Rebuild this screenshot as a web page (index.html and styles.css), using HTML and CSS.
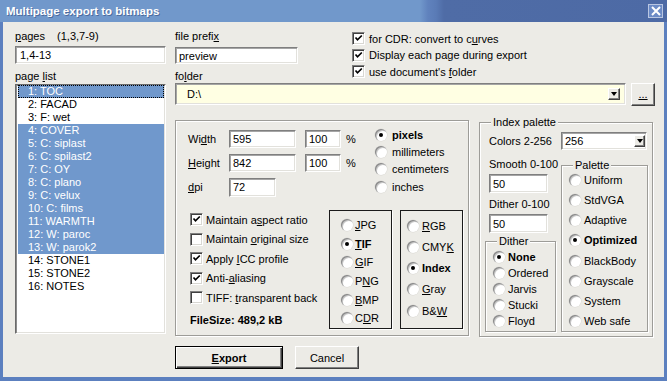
FILE: index.html
```html
<!DOCTYPE html>
<html lang="en">
<head>
    <meta charset="UTF-8">
    <meta name="viewport" content="width=device-width, initial-scale=1.0">
    <title>Multipage export to bitmaps</title>
    <link rel="stylesheet" href="styles.css">
</head>
<body>
    <div class="window">
        <div class="titlebar">
            <span class="title">Multipage export to bitmaps</span>
            <span class="close-btn">
                <svg width="10" height="10" viewBox="0 0 10 10"><path d="M1 1 L9 9 M9 1 L1 9" stroke="#fff" stroke-width="2" fill="none"/></svg>
            </span>
        </div>

        <div class="client">
            <div class="left-col">
                <div class="label"><u>p</u>ages <span class="hint">(1,3,7-9)</span></div>
                <div class="field pages-field">1,4-13</div>
                <div class="label list-label">page <u>l</u>ist</div>
                <div class="listbox">
                    <div class="item sel focus">1: TOC</div>
                    <div class="item">2: FACAD</div>
                    <div class="item">3: F: wet</div>
                    <div class="item sel">4: COVER</div>
                    <div class="item sel">5: C: siplast</div>
                    <div class="item sel">6: C: spilast2</div>
                    <div class="item sel">7: C: OY</div>
                    <div class="item sel">8: C: plano</div>
                    <div class="item sel">9: C: velux</div>
                    <div class="item sel">10: C: films</div>
                    <div class="item sel">11: WARMTH</div>
                    <div class="item sel">12: W: paroc</div>
                    <div class="item sel">13: W: parok2</div>
                    <div class="item">14: STONE1</div>
                    <div class="item">15: STONE2</div>
                    <div class="item">16: NOTES</div>
                </div>
            </div>

            <div class="main-col">
                <div class="top-row">
                    <div class="prefix-col">
                        <div class="label">file prefi<u>x</u></div>
                        <div class="field prefix-field">preview</div>
                        <div class="label folder-label">fo<u>l</u>der</div>
                    </div>
                    <div class="opts-col">
                        <div class="check-row"><span class="chk"><svg viewBox="0 0 9 9"><path d="M1.5 3.5 L3.5 5.8 L7.8 1.5" /></svg></span><span>for CDR: convert to c<u>u</u>rves</span></div>
                        <div class="check-row"><span class="chk"><svg viewBox="0 0 9 9"><path d="M1.5 3.5 L3.5 5.8 L7.8 1.5" /></svg></span><span>Display each page during export</span></div>
                        <div class="check-row"><span class="chk"><svg viewBox="0 0 9 9"><path d="M1.5 3.5 L3.5 5.8 L7.8 1.5" /></svg></span><span>use document's <u>f</u>older</span></div>
                    </div>
                </div>

                <div class="folder-row">
                    <div class="field combo folder-combo">
                        <span class="combo-text">D:\</span>
                        <span class="drop-btn"><i></i></span>
                    </div>
                    <div class="btn browse-btn"><u>...</u></div>
                </div>

                <div class="panels">
                    <div class="etched size-frame">
                        <div class="dims-row">
                            <div class="dims">
                                <div class="dim-row">
                                    <span class="dim-label">Wi<u>d</u>th</span>
                                    <div class="field size-field">595</div>
                                    <div class="field pct-field">100</div>
                                    <span class="pct">%</span>
                                </div>
                                <div class="dim-row">
                                    <span class="dim-label"><u>H</u>eight</span>
                                    <div class="field size-field">842</div>
                                    <div class="field pct-field">100</div>
                                    <span class="pct">%</span>
                                </div>
                                <div class="dim-row">
                                    <span class="dim-label"><u>d</u>pi</span>
                                    <div class="field dpi-field">72</div>
                                </div>
                            </div>
                            <div class="units">
                                <div class="radio-row"><span class="radio on"></span><b>pixels</b></div>
                                <div class="radio-row"><span class="radio"></span><span>millimeters</span></div>
                                <div class="radio-row"><span class="radio"></span><span>centimeters</span></div>
                                <div class="radio-row"><span class="radio"></span><span>inches</span></div>
                            </div>
                        </div>

                        <div class="lower-row">
                            <div class="checks">
                                <div class="check-row"><span class="chk"><svg viewBox="0 0 9 9"><path d="M1.5 3.5 L3.5 5.8 L7.8 1.5" /></svg></span><span>Maintain a<u>s</u>pect ratio</span></div>
                                <div class="check-row"><span class="chk"></span><span>Maintain <u>o</u>riginal size</span></div>
                                <div class="check-row"><span class="chk"><svg viewBox="0 0 9 9"><path d="M1.5 3.5 L3.5 5.8 L7.8 1.5" /></svg></span><span>Apply <u>I</u>CC profile</span></div>
                                <div class="check-row"><span class="chk"><svg viewBox="0 0 9 9"><path d="M1.5 3.5 L3.5 5.8 L7.8 1.5" /></svg></span><span>Anti-<u>a</u>liasing</span></div>
                                <div class="check-row"><span class="chk"></span><span>TIFF: <u>t</u>ransparent back</span></div>
                                <div class="filesize">FileSize: 489,2 kB</div>
                            </div>
                            <div class="box format-box">
                                <div class="radio-row"><span class="radio"></span><span><u>J</u>PG</span></div>
                                <div class="radio-row"><span class="radio on"></span><b><u>T</u>IF</b></div>
                                <div class="radio-row"><span class="radio"></span><span><u>G</u>IF</span></div>
                                <div class="radio-row"><span class="radio"></span><span>P<u>N</u>G</span></div>
                                <div class="radio-row"><span class="radio"></span><span><u>B</u>MP</span></div>
                                <div class="radio-row"><span class="radio"></span><span>C<u>D</u>R</span></div>
                            </div>
                            <div class="box color-box">
                                <div class="radio-row"><span class="radio"></span><span><u>R</u>GB</span></div>
                                <div class="radio-row"><span class="radio"></span><span>CMY<u>K</u></span></div>
                                <div class="radio-row"><span class="radio on"></span><b>Index</b></div>
                                <div class="radio-row"><span class="radio"></span><span><u>G</u>ray</span></div>
                                <div class="radio-row"><span class="radio"></span><span>B&amp;<u>W</u></span></div>
                            </div>
                        </div>
                    </div>

                    <div class="etched group index-group">
                        <span class="legend">Index palette</span>
                        <div class="colors-row">
                            <span class="colors-label">Colors 2-256</span>
                            <div class="field combo colors-combo">
                                <span class="combo-text">256</span>
                                <span class="drop-btn"><i></i></span>
                            </div>
                        </div>
                        <div class="palette-cols">
                            <div class="dither-col">
                                <div class="label">Smooth 0-100</div>
                                <div class="field small-field">50</div>
                                <div class="label dither-label">Dither 0-100</div>
                                <div class="field small-field">50</div>
                                <div class="etched group dither-group">
                                    <span class="legend">Dither</span>
                                    <div class="radio-row"><span class="radio on"></span><b>None</b></div>
                                    <div class="radio-row"><span class="radio"></span><span>Ordered</span></div>
                                    <div class="radio-row"><span class="radio"></span><span>Jarvis</span></div>
                                    <div class="radio-row"><span class="radio"></span><span>Stucki</span></div>
                                    <div class="radio-row"><span class="radio"></span><span>Floyd</span></div>
                                </div>
                            </div>
                            <div class="etched group palette-group">
                                <span class="legend">Palette</span>
                                <div class="radio-row"><span class="radio"></span><span>Uniform</span></div>
                                <div class="radio-row"><span class="radio"></span><span>StdVGA</span></div>
                                <div class="radio-row"><span class="radio"></span><span>Adaptive</span></div>
                                <div class="radio-row"><span class="radio on"></span><b>Optimized</b></div>
                                <div class="radio-row"><span class="radio"></span><span>BlackBody</span></div>
                                <div class="radio-row"><span class="radio"></span><span>Grayscale</span></div>
                                <div class="radio-row"><span class="radio"></span><span>System</span></div>
                                <div class="radio-row"><span class="radio"></span><span>Web safe</span></div>
                            </div>
                        </div>
                    </div>
                </div>

                <div class="buttons">
                    <div class="btn default-btn"><b><u>E</u>xport</b></div>
                    <div class="btn cancel-btn">Cancel</div>
                </div>
            </div>
        </div>
    </div>
</body>
</html>
```

FILE: styles.css
```css
:root {
    --face: #ecebe6;
    --frame: #5c80bf;
    --select: #7098cc;
    --shadow: #808080;
    --dark: #404040;
}

* {
    margin: 0;
    padding: 0;
    box-sizing: border-box;
}

body {
    font-family: 'Liberation Sans', Arial, sans-serif;
    font-size: 11px;
    color: #000;
    background: var(--frame);
}

u {
    text-decoration: underline;
    text-underline-offset: 1px;
}

.window {
    width: 667px;
    height: 381px;
    display: flex;
    flex-direction: column;
    background: var(--frame);
}

.titlebar {
    height: 22px;
    display: flex;
    align-items: center;
    padding-left: 6px;
    background: linear-gradient(to right, #7198cb 0, #7198cb 420px, #6082bd 428px, #5a7bb6 436px, #4f6ca6 444px, #4d6aa5 100%);
}

.title {
    color: #fff;
    font-weight: bold;
    font-size: 11.5px;
    text-shadow: 1px 1px 0 rgba(40, 60, 110, 0.5);
}

.close-btn {
    margin-left: auto;
    margin-right: 4px;
    width: 15px;
    height: 14px;
    display: flex;
    align-items: center;
    justify-content: center;
    border: 1px solid #b9c6e2;
    background: #6c8bc6;
}

.client {
    flex: 1;
    margin: 0 3px 4px 3px;
    background: var(--face);
    display: flex;
    padding: 8px 0 0 12px;
}

.label {
    height: 13px;
    line-height: 13px;
    white-space: nowrap;
}

.hint {
    margin-left: 9px;
}

/* sunken edit fields */
.field {
    background: #fff;
    border: 1px solid;
    border-color: #7f7f7f #fff #fff #7f7f7f;
    box-shadow: inset 1px 1px 0 #a5a5a5, inset -1px -1px 0 #e2e1dc;
    padding-left: 3px;
    display: flex;
    align-items: center;
    white-space: nowrap;
}

/* raised buttons */
.btn {
    background: var(--face);
    border: 1px solid;
    border-color: #fff var(--dark) var(--dark) #fff;
    box-shadow: inset -1px -1px 0 var(--shadow);
    display: flex;
    align-items: center;
    justify-content: center;
}

.etched {
    border: 1px solid #9d9c98;
    box-shadow: inset 1px 1px 0 #fff, 1px 1px 0 #fff;
}

.group {
    position: relative;
}

.legend {
    position: absolute;
    top: -7px;
    left: 11px;
    padding: 0 2px;
    line-height: 13px;
    background: var(--face);
}

/* left column */
.left-col {
    width: 151px;
    margin-right: 9px;
}

.pages-field {
    margin-top: 3px;
    height: 18px;
    padding-left: 4px;
}

.list-label {
    margin-top: 6px;
}

.listbox {
    margin-top: 1px;
    height: 250px;
    background: #fff;
    border: 1px solid;
    border-color: #6a6a6a #fff #fff #6a6a6a;
    box-shadow: inset 1px 1px 0 #8c8c8c, inset -1px -1px 0 #e2e1dc;
    padding: 0 1px 0 2px;
}

.item {
    height: 13px;
    line-height: 13px;
    padding-left: 10px;
    white-space: nowrap;
}

.item.sel {
    background: var(--select);
    color: #fff;
}

.item.focus {
    outline: 1px dotted #000;
    outline-offset: -1px;
}

/* main column */
.main-col {
    width: 480px;
}

.top-row {
    display: flex;
}

.prefix-col {
    width: 177px;
}

.prefix-field {
    margin-top: 4px;
    width: 123px;
    height: 17px;
}

.folder-label {
    margin-top: 6px;
}

.opts-col {
    padding-top: 2px;
    display: flex;
    flex-direction: column;
    gap: 3.5px;
}

.check-row {
    display: flex;
    align-items: center;
    gap: 4px;
    white-space: nowrap;
}

.opts-col .check-row {
    height: 13px;
}

.chk {
    width: 13px;
    height: 13px;
    flex: none;
    background: #fff;
    border: 1px solid;
    border-color: #7f7f7f #fff #fff #7f7f7f;
    box-shadow: inset 1px 1px 0 #404040, inset -1px -1px 0 #d8d7d2;
    display: flex;
    align-items: center;
    justify-content: center;
}

.chk svg {
    width: 9px;
    height: 9px;
    fill: none;
    stroke: #000;
    stroke-width: 1.7;
}

.radio-row {
    display: flex;
    align-items: center;
    gap: 3px;
    white-space: nowrap;
}

.radio {
    width: 12px;
    height: 12px;
    flex: none;
    border-radius: 50%;
    background: #fff;
    box-shadow: inset 1px 1px 0 #8a8a8a, inset 2px 2px 0 #c8c8c8, 0 0 0 0.5px #d9d8d3;
    display: flex;
    align-items: center;
    justify-content: center;
}

.radio.on::after {
    content: '';
    width: 4px;
    height: 4px;
    border-radius: 50%;
    background: #000;
}

/* folder row */
.folder-row {
    display: flex;
    gap: 5px;
    height: 22px;
}

.combo {
    position: relative;
    padding-left: 11px;
}

.folder-combo {
    width: 451px;
    height: 22px;
    background: #ffffe3;
}

.drop-btn {
    margin-left: auto;
    width: 12px;
    height: 12px;
    background: var(--face);
    border: 1px solid;
    border-color: #fff var(--dark) var(--dark) #fff;
    box-shadow: inset -1px -1px 0 var(--shadow);
    display: flex;
    align-items: center;
    justify-content: center;
}

.drop-btn i {
    width: 0;
    height: 0;
    border-left: 3.5px solid transparent;
    border-right: 3.5px solid transparent;
    border-top: 4px solid #000;
}

.folder-combo .drop-btn {
    margin-right: 5px;
}

.browse-btn {
    width: 24px;
    height: 23px;
    padding-bottom: 2px;
}

/* panels */
.panels {
    margin-top: 15px;
    display: flex;
    align-items: flex-start;
}

.size-frame {
    width: 294px;
    height: 216px;
    padding: 5px 0 0 12px;
}

.dims-row {
    display: flex;
}

.dims {
    width: 187px;
    margin-top: 4px;
}

.dim-row {
    display: flex;
    align-items: center;
    height: 18px;
    margin-bottom: 6px;
}

.dim-row:last-child {
    margin-bottom: 0;
}

.dim-label {
    width: 41px;
}

.size-field {
    width: 67px;
    height: 18px;
}

.pct-field {
    width: 36px;
    height: 18px;
    margin-left: 9px;
}

.pct {
    margin-left: 5px;
}

.dpi-field {
    width: 47px;
    height: 19px;
}

.units .radio-row {
    height: 17.33px;
    gap: 5px;
}

.lower-row {
    margin-top: 14px;
    display: flex;
}

.checks {
    width: 141px;
    padding-left: 2px;
}

.checks .check-row {
    height: 19.5px;
    gap: 3px;
}

.filesize {
    margin-top: 6px;
    height: 13px;
    line-height: 13px;
    font-weight: bold;
}

.box {
    width: 63px;
    height: 119px;
    border: 1px solid #1a1a1a;
    box-shadow: 1px 1px 0 #fff;
}

.format-box {
    padding: 5px 0 0 11px;
}

.format-box .radio-row {
    height: 18.6px;
    gap: 2px;
}

.color-box {
    margin-left: 8px;
    padding: 4px 0 0 6px;
}

.color-box .radio-row {
    height: 21.25px;
}

/* index palette */
.index-group {
    margin: 2px 0 0 10px;
    width: 174px;
    height: 215px;
    padding: 9px 0 0 5px;
}

.colors-row {
    display: flex;
    align-items: center;
    height: 18px;
    padding-left: 4px;
}

.colors-label {
    width: 72px;
}

.colors-combo {
    width: 86px;
    height: 18px;
    padding-left: 3px;
}

.colors-combo .drop-btn {
    width: 11px;
    margin-right: 1px;
}

.palette-cols {
    margin-top: 8px;
    display: flex;
    align-items: flex-start;
}

.dither-col {
    width: 71px;
}

.dither-col > .label {
    padding-left: 4px;
}

.small-field {
    margin: 3px 0 0 4px;
    width: 59px;
    height: 19px;
}

.dither-label {
    margin-top: 5px;
}

.dither-group {
    margin-top: 8px;
    width: 71px;
    height: 91px;
    padding: 7px 0 0 7px;
}

.dither-group .radio-row {
    height: 16px;
}

.palette-group {
    margin: 7px 0 0 5px;
    width: 87px;
    height: 167px;
    padding: 4px 0 0 7px;
}

.palette-group .radio-row {
    height: 20.14px;
}

/* bottom buttons */
.buttons {
    margin-top: 9px;
    display: flex;
    gap: 12px;
}

.default-btn {
    width: 108px;
    height: 23px;
    border: 1px solid #000;
    box-shadow: inset 1px 1px 0 #fff, inset -1px -1px 0 var(--dark), inset -2px -2px 0 var(--shadow);
}

.cancel-btn {
    width: 64px;
    height: 23px;
}
```
